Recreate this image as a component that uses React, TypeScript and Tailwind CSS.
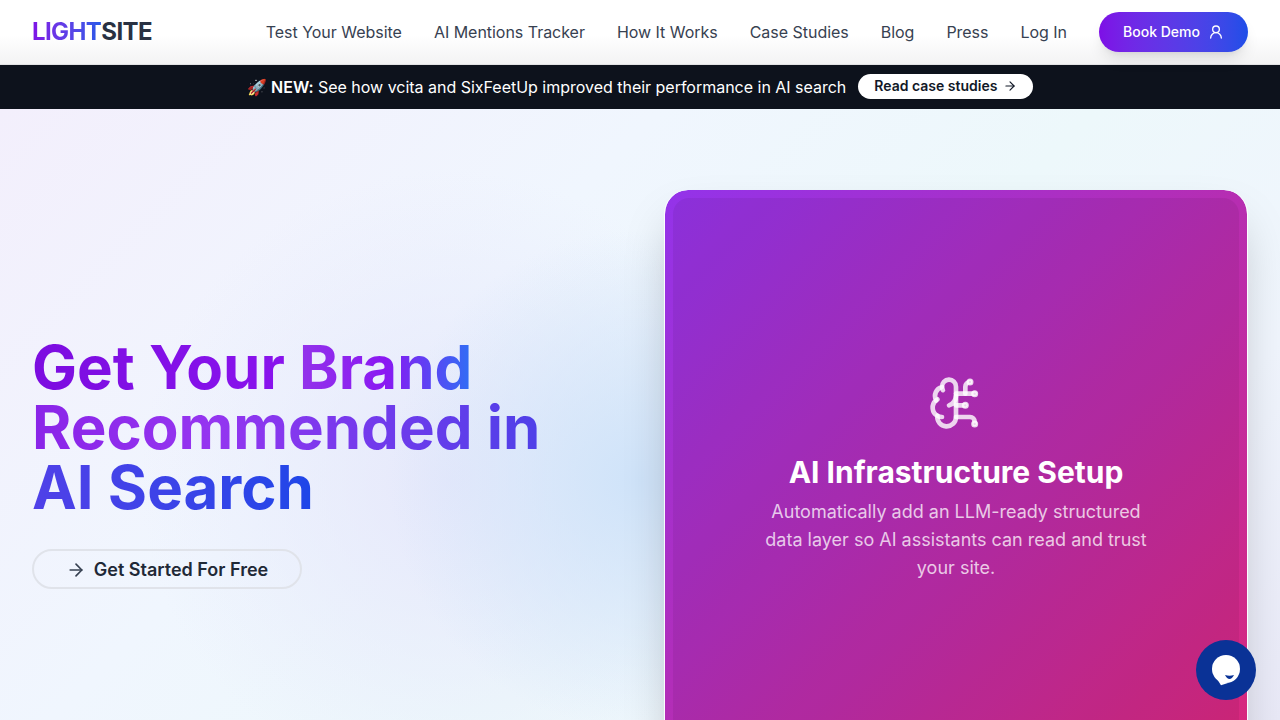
import { ArrowRight, BrainCircuit, UserRound } from "lucide-react";

const links = ["Test Your Website", "AI Mentions Tracker", "How It Works", "Case Studies", "Blog", "Press", "Log In"];

export default function App() {
  return (
    <div className="relative h-[720px] w-[1280px] overflow-hidden bg-white font-['Inter',sans-serif] text-[#1f2937]">
      <header className="relative z-10 flex h-[65px] items-center justify-between border-b border-[#e2e2e4] bg-gradient-to-b from-white from-55% to-[#f3f3f4] pl-8 pr-8">
        <div className="flex text-2xl leading-8 font-bold tracking-[-0.6px]">
          <span className="bg-gradient-to-r from-[#7e0ee6] to-[#2258e8] bg-clip-text text-transparent">LIGHT</span>
          <span className="text-[#293142]">SITE</span>
        </div>
        <nav className="flex items-center gap-8">
          {links.map((l) => (
            <a key={l} className="text-base leading-6 tracking-[-0.027px] text-[#374151]">{l}</a>
          ))}
          <button className="flex h-10 w-[149px] items-center justify-center gap-2 rounded-full bg-gradient-to-r from-[#7e0ee6] to-[#1d4ee8] text-sm font-medium text-white shadow-lg">
            Book Demo
            <UserRound size={16} strokeWidth={2} />
          </button>
        </nav>
      </header>
      <div className="flex h-[44px] items-center justify-center gap-3 bg-[#0d121c] text-base text-white">
        <span className="tracking-[-0.015px]">
          <span>🚀</span> <span className="font-semibold">NEW:</span> See how vcita and SixFeetUp improved their performance in AI search
        </span>
        <a className="mb-[2px] flex h-[25px] items-center gap-1.5 rounded-full bg-white px-4 text-sm font-semibold text-[#111827]">
          Read case studies
          <ArrowRight size={14} strokeWidth={2} />
        </a>
      </div>
      <main className="relative flex h-[611px] items-start justify-between bg-[linear-gradient(135deg,#f3effc_0%,#f0f6fe_35%,#edf8fb_58%,#f0f5fd_80%,#e9e9f7_100%)] pl-8 pr-8">
        <div className="pointer-events-none absolute inset-0 bg-[radial-gradient(circle_at_640px_371px,#cfe3f9_0%,#cfe3f900_250px),radial-gradient(circle_at_450px_371px,#e6e8fb_0%,#e6e8fb00_310px)]" />
        <div className="relative flex h-[611px] w-[540px] flex-col pt-[228px]">
          <h1 className="text-[60px] leading-[60px] font-bold">
            <span className="block">
              <span className="bg-gradient-to-r from-[#7c0ce0] to-[#8a14ee] bg-clip-text text-transparent">Get Your </span>
              <span className="bg-[linear-gradient(90deg,#9333ea_0%,#8a18f2_50%,#2f6ff5_100%)] bg-clip-text text-transparent">Brand</span>
            </span>
            <span className="block w-fit bg-[linear-gradient(90deg,#8a24e8_0%,#9535f0_35%,#4f40e8_100%)] bg-clip-text text-transparent">Recommended in</span>
            <span className="block w-fit bg-gradient-to-r from-[#4f40e8] to-[#1d46e8] bg-clip-text text-transparent">AI Search</span>
          </h1>
          <button className="mt-[32px] flex h-10 w-[270px] items-center justify-center gap-2 rounded-full border-2 border-[#e0e3ea] pt-[2px] text-lg font-semibold text-[#1f2937]">
            <ArrowRight size={20} strokeWidth={2} className="text-[#374151]" />
            Get Started For Free
          </button>
        </div>
        <section className="relative mt-[81px] h-[600px] w-[584px] shrink-0 rounded-3xl border-x border-x-white/80 bg-[linear-gradient(135deg,#9333ea_0%,#db2777_100%)] bg-clip-padding p-2 shadow-2xl">
          <div className="flex h-full flex-col items-center rounded-2xl bg-black/[0.06] pt-[177px] text-center">
            <BrainCircuit size={56} strokeWidth={2} className="text-white/80" />
            <h2 className="mt-[23px] text-[30px] leading-9 font-bold text-white">AI Infrastructure Setup</h2>
            <p className="mt-[8px] w-[400px] text-lg leading-7 text-white/75">
              Automatically add an LLM-ready structured data layer so AI assistants can read and trust your site.
            </p>
          </div>
        </section>
      </main>
      <button className="absolute bottom-5 right-6 h-[60px] w-[60px] rounded-full bg-[#0a3296]">
        <svg width="60" height="60" viewBox="0 0 60 60" className="block">
          <circle cx="30" cy="29" r="14" fill="#fff" />
          <path d="M21 39L32 43L25 45.3z" fill="#fff" />
          <path d="M29 35Q33.5 36.5 38 35Q36 39 33.5 39Q31 39 29 35z" fill="#0a3296" />
        </svg>
      </button>
    </div>
  );
}
